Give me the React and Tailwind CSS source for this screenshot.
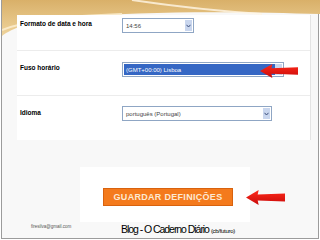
import React from "react";

const font = { fontFamily: '"Liberation Sans", Arial, sans-serif' };

function Arrow({ className }) {
  return (
    <svg className={className} viewBox="0 0 40 15" preserveAspectRatio="none">
      <defs>
        <linearGradient id="ag" x1="0" y1="0" x2="0" y2="1">
          <stop offset="0" stopColor="#ff2a1a" />
          <stop offset="1" stopColor="#c80a0a" />
        </linearGradient>
      </defs>
      <polygon points="0,7.5 13,0 12,4.5 40,3.5 40,11.5 12,10.5 13,15" fill="url(#ag)" />
    </svg>
  );
}

function Select({ w, children, selected }) {
  return (
    <div
      className={`${w} h-[15px] border border-[#8fa6c4] bg-white flex items-stretch p-[1px]`}
    >
      <div
        className={`flex-1 flex items-center pl-[2px] text-[6px] leading-none ${
          selected ? "bg-[#3567c4] text-white" : "text-[#444]"
        }`}
      >
        {children}
      </div>
      <div className="w-[7px] bg-[#c9d6ee] flex items-center justify-center">
        <svg width="5" height="4" viewBox="0 0 5 4">
          <path d="M0.5,0.8 L2.5,3 L4.5,0.8" stroke="#3d4f7c" strokeWidth="1" fill="none" />
        </svg>
      </div>
    </div>
  );
}

export default function App() {
  return (
    <div className="w-[320px] h-[240px] bg-white overflow-hidden" style={font}>
      <div className="relative ml-[1px] w-[318px] h-[239px] border-l border-r border-b border-[#9c9c9c] bg-[#f8f8f8]">
        <svg className="absolute left-0 top-0 w-[318px] h-[40px]" viewBox="0 0 318 40">
          <defs>
            <linearGradient id="tan" x1="0" y1="0" x2="0" y2="1">
              <stop offset="0" stopColor="#d9b069" />
              <stop offset="1" stopColor="#efd49c" />
            </linearGradient>
          </defs>
          <path d="M0,0 H318 V14 C250,12 150,10 60,18 C30,21 10,28 0,36 Z" fill="url(#tan)" />
          <path d="M130,0 C170,6 200,10 260,14" stroke="#fff6e6" strokeWidth="2" fill="none" opacity="0.8" />
          <path d="M0,30 C20,22 60,16 120,14" stroke="#fbeccd" strokeWidth="2" fill="none" opacity="0.9" />
        </svg>

        <div className="relative flex flex-col">
          <div className="ml-[15px] mt-[15px] w-[294px] h-[125px] bg-white border-r border-[#e4e4e4] flex flex-col">
            <div className="h-[36px] flex items-start pl-[3px] pt-[3px] border-b border-[#ececec]">
              <div className="w-[102px] mt-[3px] text-[6.5px] font-semibold text-black leading-none">
                Formato de data e hora
              </div>
              <Select w="w-[72px]">14:56</Select>
            </div>
            <div className="h-[45px] flex items-start pl-[3px] pt-[11px] border-b border-[#ececec]">
              <div className="w-[102px] mt-[3px] text-[6.5px] font-semibold text-black leading-none">
                Fuso horário
              </div>
              <Select w="w-[162px]" selected>
                (GMT+00:00) Lisboa
              </Select>
            </div>
            <div className="flex-1 flex items-start pl-[3px] pt-[10px]">
              <div className="w-[102px] mt-[4px] text-[6.5px] font-semibold text-black leading-none">
                Idioma
              </div>
              <Select w="w-[150px]">português (Portugal)</Select>
            </div>
          </div>

          <div className="relative ml-[78px] mt-[27px] w-[170px] h-[55px] bg-white">
            <div className="ml-[23px] mt-[21px] w-[130px] h-[18px] bg-[#f47a1c] border border-[#d8620e] flex items-center justify-center text-[9px] font-bold text-[#fde9d2] tracking-[0.3px] leading-none">
              GUARDAR DEFINIÇÕES
            </div>
            <Arrow className="absolute left-[166px] top-[23px] w-[39px] h-[15px]" />
          </div>

          <div className="flex items-start pl-[29px]">
            <div className="w-[90px] mt-[3px] text-[4.5px] text-[#555] leading-none">
              firesilva@gmail.com
            </div>
            <div className="mt-[2px] flex items-end leading-none text-black">
              <span className="text-[10.5px] tracking-[-1.05px]">Blog - O Caderno Diário</span>
              <span className="ml-[2px] text-[6px] tracking-[-0.3px] mb-[1px]">(cb/futuro)</span>
            </div>
          </div>
        </div>

        <Arrow className="absolute left-[258px] top-[64px] w-[38px] h-[14px]" />
      </div>
    </div>
  );
}
